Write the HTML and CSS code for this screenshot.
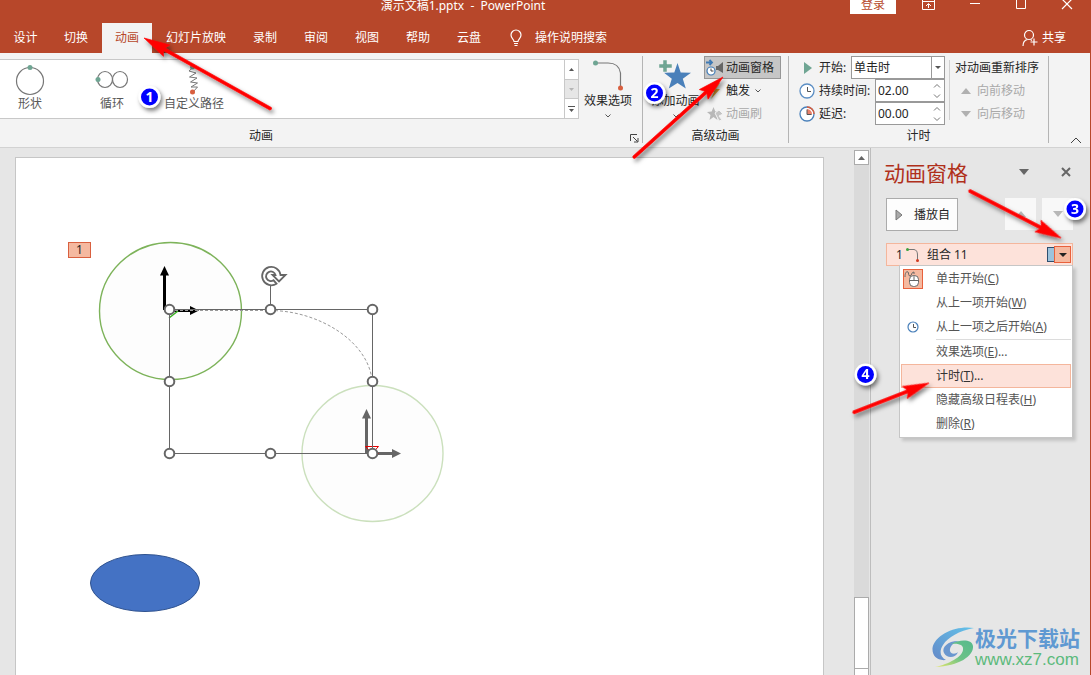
FILE: index.html
```html
<!DOCTYPE html>
<html lang="zh-CN">
<head>
<meta charset="utf-8">
<title>演示文稿1.pptx - PowerPoint</title>
<link rel="stylesheet" href="styles.css">
</head>
<body>
<div class="app">
  <header class="header">
    <div class="titlebar">
      <div class="doc-title">演示文稿1.pptx&nbsp; -&nbsp; PowerPoint</div>
      <button class="login" type="button">登录</button>
      <button class="win-btn" type="button" aria-label="功能区显示选项"><svg width="16" height="12" viewBox="0 0 16 12" fill="none" stroke="#fff"><path d="M1.500 -2V9.500H13.500V-2M1 1.500H14M7.500 8V4M5 6L7.500 3.500L10 6"/></svg></button>
      <button class="win-btn" type="button" aria-label="最小化"><svg width="16" height="12" viewBox="0 0 16 12" stroke="#fff"><path d="M3 3.500H13"/></svg></button>
      <button class="win-btn" type="button" aria-label="最大化"><svg width="16" height="12" viewBox="0 0 16 12" fill="none" stroke="#fff"><path d="M3.500 -2V8.500H12.500V-2"/></svg></button>
      <button class="win-btn" type="button" aria-label="关闭"><svg width="16" height="12" viewBox="0 0 16 12" stroke="#fff" stroke-width="1.200"><path d="M3 -1L13 9M13 -1L3 9"/></svg></button>
    </div>
    <nav class="tabs">
      <button class="tab" type="button">设计</button>
      <button class="tab" type="button">切换</button>
      <button class="tab tab-active" type="button">动画</button>
      <button class="tab" type="button">幻灯片放映</button>
      <button class="tab" type="button">录制</button>
      <button class="tab" type="button">审阅</button>
      <button class="tab" type="button">视图</button>
      <button class="tab" type="button">帮助</button>
      <button class="tab" type="button">云盘</button>
      <button class="tell-me" type="button"><svg width="14" height="18" viewBox="0 0 14 18" fill="none" stroke="#fff" stroke-width="1.200"><path d="M5 12.500C5 10.500 2 9.500 2 6A5 5 0 0 1 12 6C12 9.500 9 10.500 9 12.500ZM5 14.500H9M5.500 16.500H8.500"/></svg><span>操作说明搜索</span></button>
      <button class="share" type="button"><svg width="16" height="18" viewBox="0 0 16 18" fill="none" stroke="#fff" stroke-width="1.200"><circle cx="7" cy="6" r="4.500"/><path d="M1 17C1 13 3 11 5.500 10.500M8.500 10.500L10 11.500M12 9.500V16.500M8.500 13H15.500"/></svg><span>共享</span></button>
    </nav>
  </header>

  <section class="ribbon">
    <div class="group group-anim">
      <div class="group-body">
        <div class="gallery">
          <div class="gallery-items">
            <button class="gallery-item" type="button"><svg width="32" height="32" viewBox="0 0 32 32" fill="none"><circle cx="16" cy="17" r="13.500" stroke="#777" stroke-width="1.200"/><circle cx="16" cy="3.500" r="2.500" fill="#6fa593"/></svg><span>形状</span></button>
            <button class="gallery-item" type="button"><svg width="36" height="32" viewBox="0 0 36 32" fill="none"><ellipse cx="11" cy="15.500" rx="7.500" ry="8" stroke="#777" stroke-width="1.200"/><ellipse cx="26" cy="15.500" rx="7.500" ry="8" stroke="#777" stroke-width="1.200"/><circle cx="4" cy="15.500" r="2.500" fill="#6fa593"/></svg><span>循环</span></button>
            <button class="gallery-item" type="button"><svg width="32" height="32" viewBox="0 0 32 32" fill="none"><path d="M14.500 4L11 7L18 9L11.500 13L19 14L12.500 18L19.500 19L13 23L19.500 23L15 28" stroke="#777"/><circle cx="14.500" cy="3" r="2.500" fill="#6fa593"/><circle cx="14.500" cy="28" r="2.500" fill="#d85f3f"/></svg><span>自定义路径</span></button>
          </div>
          <div class="gallery-scroll">
            <button type="button" aria-label="上一行"><svg width="5" height="3"><path d="M0 3L2.500 0L5 3Z" fill="#555"/></svg></button>
            <button type="button" class="off" aria-label="下一行"><svg width="5" height="3"><path d="M0 0H5L2.500 3Z" fill="#b5b5b5"/></svg></button>
            <button type="button" aria-label="其他"><svg width="7" height="6"><path d="M0 0H7V1H0ZM1 3H6L3.500 6Z" fill="#555"/></svg></button>
          </div>
        </div>
        <button class="big-btn effect" type="button">
          <svg width="34" height="34" viewBox="0 0 34 34" fill="none"><path d="M5 4H17Q28 4 29.500 14V27" stroke="#777" stroke-width="1.200"/><circle cx="4.500" cy="4" r="2.500" fill="#6fa593"/><circle cx="29.500" cy="29" r="2.500" fill="#d85f3f"/></svg>
          <span>效果选项</span>
          <svg class="chev" width="6" height="4" fill="none" stroke="#555"><path d="M0.500 0.500L3 3L5.500 0.500"/></svg>
        </button>
      </div>
      <div class="group-label">动画</div>
      <button class="launcher" type="button" aria-label="动画设置"><svg width="9" height="9" fill="none" stroke="#444"><path d="M0.500 7V0.500H7M3 3L7.500 7.500M8 4V8H4"/></svg></button>
    </div>

    <div class="group group-adv">
      <div class="group-body">
        <button class="big-btn add" type="button">
          <svg width="34" height="34" viewBox="0 0 34 34"><path d="M18.500 4L21.700 13.500L32 13.800L23.800 19.800L26.800 29.500L18.500 24L9.800 29.500L12.800 19.800L5 13.800L15.300 13.500Z" fill="#4a80ba"/><path d="M4 1H8V5H13V9H8V13H4V9H0V5H4Z" fill="#6fa593" stroke="#f3f3f3" stroke-width=".5"/></svg>
          <span>添加动画</span>
          <svg class="chev" width="6" height="4" fill="none" stroke="#555"><path d="M0.500 0.500L3 3L5.500 0.500"/></svg>
        </button>
        <div class="stack">
          <button class="cmd cmd-on" type="button"><svg width="18" height="18" viewBox="0 0 18 18" fill="none"><path d="M0 3.500H6M3.500 1L6 3.500L3.500 6" stroke="#3f7ab5" stroke-width="1.800"/><circle cx="5" cy="12" r="4" fill="#fff" stroke="#3f7ab5" stroke-width="1.200"/><path d="M5 9.500V12H7.500" stroke="#444"/><path d="M10 7H12L17 3V14L12 11H10Z" fill="#666"/></svg><span>动画窗格</span></button>
          <button class="cmd" type="button"><svg width="18" height="18" viewBox="0 0 18 18"><path d="M9 1H14L10 7H14L5 17L8 10H4Z" fill="#e3a33c"/></svg><span>触发</span><svg class="chev" width="6" height="4" fill="none" stroke="#555"><path d="M0.500 0.500L3 3L5.500 0.500"/></svg></button>
          <button class="cmd" type="button" disabled><svg width="18" height="18" viewBox="0 0 18 18"><path d="M7.500 2L9.300 6.500L14 7L10.500 10L11.500 15L7.500 12L3.500 15L4.500 10L1 7L5.700 6.500Z" fill="#b8b8b8"/><path d="M9 8L13 5L17 9L13 11L16 15L13 16Z" fill="#c4c4c4" stroke="#f3f3f3"/></svg><span>动画刷</span></button>
        </div>
      </div>
      <div class="group-label">高级动画</div>
    </div>

    <div class="group group-time">
      <div class="group-body">
        <div class="timing">
          <div class="field">
            <svg width="16" height="16"><path d="M5 2L13 8L5 14Z" fill="#6fa593"/></svg>
            <label for="start">开始:</label>
            <div class="combo"><select id="start"><option>单击时</option></select><span class="combo-arrow"><svg width="6" height="3"><path d="M0 0H6L3 3Z" fill="#555"/></svg></span></div>
          </div>
          <div class="field">
            <svg width="16" height="16" fill="none"><circle cx="8" cy="8" r="7" fill="#fff" stroke="#5b8ec4" stroke-width="1.300"/><path d="M8.500 4V8.500H12" stroke="#555"/></svg>
            <label for="duration">持续时间:</label>
            <div class="spin"><input id="duration" type="text" value="02.00"><div class="spin-arrows"><svg width="8" height="16" fill="none" stroke="#777"><path d="M1 4.500L4 1.500L7 4.500M1 11.500L4 14.500L7 11.500"/></svg></div></div>
          </div>
          <div class="field">
            <svg width="16" height="16" fill="none"><circle cx="8" cy="8" r="7" fill="#fff" stroke="#4a80ba" stroke-width="1.300"/><path d="M8 1A7 7 0 0 1 15 8" stroke="#d85f3f" stroke-width="1.500"/><path d="M8 3A5 5 0 0 1 13 8.500H8Z" fill="#e8806a"/><path d="M8 3.500V8.500H12.500" stroke="#555"/></svg>
            <label for="delay">延迟:</label>
            <div class="spin"><input id="delay" type="text" value="00.00"><div class="spin-arrows"><svg width="8" height="16" fill="none" stroke="#777"><path d="M1 4.500L4 1.500L7 4.500M1 11.500L4 14.500L7 11.500"/></svg></div></div>
          </div>
        </div>
        <div class="reorder">
          <div class="reorder-title">对动画重新排序</div>
          <button class="move" type="button" disabled><svg width="10" height="6"><path d="M0 6L5 0L10 6Z" fill="#b0b0b0"/></svg><span>向前移动</span></button>
          <button class="move" type="button" disabled><svg width="10" height="6"><path d="M0 0H10L5 6Z" fill="#b0b0b0"/></svg><span>向后移动</span></button>
        </div>
      </div>
      <div class="group-label">计时</div>
    </div>
    <div class="ribbon-end"><button type="button" aria-label="折叠功能区"><svg width="12" height="7" fill="none" stroke="#444"><path d="M1 6L6 1L11 6"/></svg></button></div>
  </section>

  <main class="workspace">
    <div class="canvas">
      <div class="slide">
        <svg class="drawing" width="460" height="460" viewBox="16 158 460 460" fill="none">
          <ellipse cx="170.500" cy="311" rx="71" ry="68.500" fill="#fdfdfd" stroke="#7db35a" stroke-width="1.400"/>
          <ellipse cx="372.500" cy="453.500" rx="70.500" ry="68" fill="#fdfdfd" stroke="#cbe0bd" stroke-width="1.400"/>
          <path d="M164.500 310V274" stroke="#000" stroke-width="3"/><path d="M160 275.500L164.500 266L169 275.500Z" fill="#000"/>
          <path d="M170 310.500H191" stroke="#000" stroke-width="3"/><path d="M190 306L199 310.500L190 315Z" fill="#000"/>
          <path d="M366.500 453V418" stroke="#666" stroke-width="3"/><path d="M362 418.500L366.500 409L371 418.500Z" fill="#666"/>
          <path d="M372 453.500H393" stroke="#666" stroke-width="3"/><path d="M392 449L401 453.500L392 458Z" fill="#666"/>
          <path d="M169 318L178 311" stroke="#37b51f" stroke-width="1.500"/>
          <path d="M365.500 446.500H378.500L372 453.500ZM365.500 453.500H378.500" stroke="#e00000"/>
          <path d="M170 310.500H271C320 311 368 342 372 380" stroke="#999" stroke-dasharray="3 2"/>
          <path d="M169.500 309.500H372.500V453.500H169.500ZM270.500 309V285" stroke="#666"/>
          <g fill="#fff" stroke="#666" stroke-width="2">
            <circle cx="169.500" cy="309.500" r="4.800"/><circle cx="270.500" cy="309.500" r="4.800"/><circle cx="372.500" cy="309.500" r="4.800"/>
            <circle cx="169.500" cy="381.500" r="4.800"/><circle cx="372.500" cy="381.500" r="4.800"/>
            <circle cx="169.500" cy="453.500" r="4.800"/><circle cx="270.500" cy="453.500" r="4.800"/><circle cx="372.500" cy="453.500" r="4.800"/>
          </g>
          <path d="M276.500 283.700A9.200 9.200 0 1 1 280.500 275H285.500L279 281.500L272.500 275H275.500A4.800 4.800 0 1 0 273.500 280.300Z" fill="#fff" stroke="#666" stroke-width="1.800"/>
          <ellipse cx="145" cy="583" rx="54.500" ry="28.500" fill="#4472c4" stroke="#2f528f"/>
        </svg>
        <div class="anim-tag">1</div>
      </div>
    </div>
    <div class="scrollbar">
      <button class="scroll-up" type="button" aria-label="向上滚动"><svg width="7" height="4"><path d="M0 4L3.500 0L7 4Z" fill="#666"/></svg></button>
      <div class="scroll-track"></div>
      <div class="scroll-thumb"></div>
      <div class="scroll-end"></div>
    </div>
    <aside class="pane">
      <div class="pane-head">
        <h2>动画窗格</h2>
        <button type="button" aria-label="窗格选项"><svg width="10" height="6"><path d="M0 0H10L5 6Z" fill="#666"/></svg></button>
        <button type="button" aria-label="关闭窗格"><svg width="10" height="10" stroke="#666" stroke-width="2"><path d="M1 1L9 9M9 1L1 9"/></svg></button>
      </div>
      <div class="pane-tools">
        <button class="play" type="button"><svg width="8" height="12"><path d="M1 1L7 6L1 11Z" fill="#aaa" stroke="#777"/></svg><span>播放自</span></button>
        <button class="order" type="button" aria-label="上移"><svg width="10" height="6"><path d="M0 6L5 0L10 6Z" fill="#b8b8b8"/></svg></button>
        <button class="order" type="button" aria-label="下移"><svg width="10" height="6"><path d="M0 0H10L5 6Z" fill="#b8b8b8"/></svg></button>
      </div>
      <div class="entry">
        <span>1</span>
        <svg width="16" height="16" fill="none"><path d="M3 2.500H9Q12.500 3 12.500 8V13" stroke="#777"/><circle cx="2.500" cy="2.500" r="1.500" fill="#3fa33f"/><circle cx="12.500" cy="13.500" r="1.500" fill="#d03a20"/></svg>
        <span class="entry-name">组合 11</span>
        <i class="bar"></i>
        <button class="entry-drop" type="button" aria-label="打开菜单"><svg width="8" height="4"><path d="M0 0H8L4 4Z" fill="#222"/></svg></button>
        <div class="menu" role="menu">
          <button type="button" role="menuitem"><span class="mi mi-on"><svg width="18" height="18" fill="none" stroke="#666"><path d="M1 7C1 2 3 1 4 2S4 6 6 6S7 2 10 2V4"/><rect x="5.500" y="5.500" width="9" height="11" rx="4" fill="#fff"/><path d="M5.500 10.500H14.500M10 5.500V10.500"/></svg></span>单击开始(<u>C</u>)</button>
          <button type="button" role="menuitem"><span class="mi"></span>从上一项开始(<u>W</u>)</button>
          <button type="button" role="menuitem"><span class="mi"><svg width="12" height="12" fill="none"><circle cx="6" cy="6" r="5" stroke="#4a80ba" stroke-width="1.200"/><path d="M6.500 3V6.500H9" stroke="#555"/></svg></span>从上一项之后开始(<u>A</u>)</button>
          <div class="menu-sep"></div>
          <button type="button" role="menuitem"><span class="mi"></span>效果选项(<u>E</u>)...</button>
          <button type="button" role="menuitem" class="hot"><span class="mi"></span>计时(<u>T</u>)...</button>
          <button type="button" role="menuitem"><span class="mi"></span>隐藏高级日程表(<u>H</u>)</button>
          <button type="button" role="menuitem"><span class="mi"></span>删除(<u>R</u>)</button>
        </div>
      </div>
      <div class="brand">
        <svg width="43" height="42" viewBox="0 0 43 42">
          <defs>
            <linearGradient id="blue" x1="0" y1="1" x2="1" y2="0"><stop offset="0" stop-color="#6489c8"/><stop offset="1" stop-color="#63c3ea"/></linearGradient>
            <linearGradient id="green" x1="0" y1="1" x2="1" y2="0"><stop offset="0" stop-color="#e8e86a"/><stop offset=".5" stop-color="#6cc287"/><stop offset="1" stop-color="#56b98c"/></linearGradient>
          </defs>
          <path d="M42 1C25 -2 3 7 0.500 21C0 29 5 34 14 33C8 30 7 24 11 18C16 10 27 4 42 1Z" fill="url(#blue)"/>
          <path d="M28 14C17 13 9 20 12 26C15 32 24 31 26 25C23 28 17 27 18 22C19 18 22 15 28 14Z" fill="#6a97cf"/>
          <path d="M19 17C28 12 40 12 41 19C42 29 27 39 3 40C17 37 30 30 31 23C32 18 27 16 19 17Z" fill="url(#green)"/>
        </svg>
        <div class="brand-text"><div class="brand-name">极光下载站</div><div class="brand-url">www.xz7.com</div></div>
      </div>
    </aside>
  </main>

  <svg class="notes notes-left" width="300" height="130" viewBox="0 0 300 130">
    <defs><filter id="sh" x="-30%" y="-50%" width="160%" height="220%"><feDropShadow dx="2" dy="3" stdDeviation="2" flood-color="#000" flood-opacity=".5"/></filter></defs>
    <g filter="url(#sh)"><path transform="translate(144 38) rotate(29.200)" d="M0 0L26 -6.500L23 -1.500H145Q147 0 145 1.500H23L26 6.500Z" fill="#f00" stroke="#f00" stroke-width=".6"/></g>
    <g filter="url(#sh)"><circle cx="149.500" cy="97" r="11" fill="#fff"/></g>
    <circle cx="149.500" cy="97" r="8.500" fill="#00f"/><text class="num" x="149.500" y="102">1</text>
  </svg>
  <svg class="notes notes-right" width="491" height="440" viewBox="600 0 491 440">
    <g filter="url(#sh)" fill="#f00" stroke="#f00" stroke-width=".6">
      <path transform="translate(723 77) rotate(138)" d="M0 0L26 -6.500L23 -1.500H120Q122 0 120 1.500H23L26 6.500Z"/>
      <path transform="translate(1061 238) rotate(207.300)" d="M0 0L26 -6.500L23 -1.500H103Q105 0 103 1.500H23L26 6.500Z"/>
      <path transform="translate(929 383) rotate(158.700)" d="M0 0L26 -6.500L23 -1.500H81Q83 0 81 1.500H23L26 6.500Z"/>
    </g>
    <g filter="url(#sh)" fill="#fff"><circle cx="654.500" cy="93" r="11"/><circle cx="1075" cy="209" r="11"/><circle cx="865.500" cy="374.500" r="11"/></g>
    <g fill="#00f"><circle cx="654.500" cy="93" r="8.500"/><circle cx="1075" cy="209" r="8.500"/><circle cx="865.500" cy="374.500" r="8.500"/></g>
    <text class="num" x="654.500" y="98">2</text><text class="num" x="1075" y="214">3</text><text class="num" x="865.500" y="379">4</text>
  </svg>
</div>
</body>
</html>
```

FILE: styles.css
```css
* { box-sizing: border-box; }
body {
  margin: 0;
  font: 12px/16px "Noto Sans", "Noto Sans CJK SC", sans-serif;
  color: #262626;
}
button, input, select { font: inherit; color: inherit; margin: 0; }
button { padding: 0; border: 0; background: none; white-space: nowrap; }
svg { display: block; flex: none; }

.app {
  position: relative;
  display: flex;
  flex-direction: column;
  height: 100vh;
  overflow: hidden;
  background: #e6e6e6;
  border-right: 1px solid #b7472a;
}

/* Title bar and tabs */
.header { background: #b7472a; color: #fff; }
.titlebar { display: flex; align-items: flex-start; height: 23px; }
.doc-title { flex: 1; padding-left: 76px; text-align: center; line-height: 12px; }
.login {
  width: 46px;
  height: 14px;
  margin-right: 10px;
  background: #fff;
  color: #b7472a;
  line-height: 10px;
  padding-bottom: 4px;
}
.win-btn { width: 46px; display: flex; justify-content: center; }
.tabs { display: flex; gap: 1px; height: 30px; padding-left: 1px; }
.tab { width: 50px; line-height: 28px; }
.tab:first-child { width: 49px; }
.tab:nth-child(4) { width: 86px; }
.tab-active { background: #f3f3f3; color: #b7472a; }
.tell-me { display: flex; align-items: center; gap: 12px; margin-left: 14px; }
.share { display: flex; align-items: center; gap: 4px; margin-left: auto; padding-right: 24px; }

/* Ribbon */
.ribbon {
  display: flex;
  height: 95px;
  background: #f3f3f3;
  border-bottom: 1px solid #d2d2d2;
}
.group {
  position: relative;
  display: flex;
  flex-direction: column;
  margin: 3px 0 4px;
  border-right: 1px solid #b4b4b4;
}
.group-body { display: flex; height: 74px; }
.group-label { text-align: center; line-height: 14px; height: 14px; }
.group-anim { flex: 1; }
.group-anim .group-label { padding-right: 120px; }
.group-adv { width: 146px; }
.group-time { width: 260px; }
.launcher { position: absolute; right: 3px; bottom: 0; }

.gallery {
  flex: 1;
  display: flex;
  height: 60px;
  margin-top: 3px;
  background: #fff;
  border: 1px solid #c8c8c8;
  border-left: 0;
}
.gallery-items { flex: 1; display: flex; gap: 22px; }
.gallery-item {
  display: flex;
  flex-direction: column;
  align-items: center;
  width: 60px;
  padding-top: 4px;
  color: #595959;
}
.gallery-scroll { display: flex; flex-direction: column; width: 14px; border-left: 1px solid #c8c8c8; }
.gallery-scroll button { flex: 1; display: flex; align-items: center; justify-content: center; }
.gallery-scroll .off { background: #e6e6e6; border: solid #c8c8c8; border-width: 1px 0; }

.big-btn { display: flex; flex-direction: column; align-items: center; padding-top: 3px; }
.effect { width: 58px; margin-right: 5px; }
.add { width: 49px; margin: 0 4px 0 8px; }
.big-btn .chev { margin-top: 5px; }
.stack { width: 77px; }
.cmd {
  display: flex;
  align-items: center;
  gap: 2px;
  width: 100%;
  height: 23px;
  padding-left: 1px;
  border: 1px solid transparent;
}
.cmd-on { background: #c6c6c6; border-color: #969696; }
.cmd .chev { margin-left: 3px; }
.cmd:disabled, .move:disabled { color: #a9a9a9; }

.timing { width: 146px; margin-left: 10px; }
.field { display: flex; align-items: center; height: 23px; }
.field label { margin-left: 4px; white-space: nowrap; }
.combo, .spin {
  display: flex;
  margin-left: auto;
  height: 23px;
  background: #fff;
  border: 1px solid #999;
}
.combo { width: 94px; }
.spin { width: 70px; }
.combo select {
  flex: 1;
  min-width: 0;
  appearance: none;
  border: 0;
  background: none;
  padding: 0 2px;
}
.combo-arrow { display: flex; align-items: center; justify-content: center; width: 13px; border-left: 1px solid #999; }
.spin input { flex: 1; min-width: 0; border: 0; background: none; padding: 0 2px; }
.spin-arrows { display: flex; align-items: center; padding-right: 3px; }
.reorder {
  height: 60px;
  margin: 4px 0 0 4px;
  padding-left: 5px;
  border-left: 1px solid #d0d0d0;
}
.reorder-title { height: 19px; }
.move { display: flex; align-items: center; gap: 6px; height: 23px; padding-left: 6px; }
.ribbon-end { display: flex; align-items: flex-end; justify-content: flex-end; width: 41px; padding: 0 8px 3px 0; }

/* Editing area */
.workspace { flex: 1; display: flex; min-height: 0; }
.canvas { flex: 1; display: flex; min-width: 0; padding: 9px 30px 0 15px; }
.slide { position: relative; flex: 1; min-width: 0; background: #fff; border: 1px solid #c6c6c6; border-bottom: 0; }
.anim-tag {
  position: absolute;
  left: 52px;
  top: 84px;
  width: 23px;
  height: 16px;
  border: 1px solid #d9603f;
  background: #f5b9a0;
  line-height: 14px;
  text-align: center;
}
.scrollbar { display: flex; flex-direction: column; width: 15px; padding-top: 2px; margin-right: 1px; }
.scroll-up {
  display: flex;
  align-items: center;
  justify-content: center;
  height: 15px;
  background: #fff;
  border: 1px solid #ababab;
}
.scroll-track { flex: 1; background: #dadada; }
.scroll-thumb { height: 72px; background: #fff; border: 1px solid #ababab; }
.scroll-end { height: 6px; background: #fff; border: 1px solid #ababab; border-width: 0 1px; }

/* Animation pane */
.pane { position: relative; width: 220px; padding: 11px 17px 0 15px; border-left: 1px solid #bdbdbd; }
.pane-head { display: flex; align-items: center; height: 28px; padding-right: 2px; }
.pane-head h2 { flex: 1; margin: 0 0 0 -2px; font-size: 21px; font-weight: 400; line-height: 28px; color: #b0301b; }
.pane-head button { margin-left: 32px; padding-bottom: 3px; }
.pane-tools { display: flex; gap: 6px; margin-top: 11px; }
.play {
  display: flex;
  align-items: center;
  gap: 11px;
  width: 72px;
  height: 33px;
  margin-right: auto;
  padding-left: 8px;
  background: #fdfdfd;
  border: 1px solid #ababab;
}
.order { display: flex; align-items: center; justify-content: center; width: 31px; height: 32px; background: #f8f8f8; }
.entry {
  position: relative;
  display: flex;
  align-items: center;
  height: 23px;
  margin-top: 12px;
  padding: 0 1px 0 9px;
  background: #fde2da;
  border: 1px solid #f4b69c;
}
.entry > svg { margin-left: 2px; }
.entry-name { flex: 1; margin-left: 6px; }
.bar { width: 7px; height: 15px; background: #9dc3dc; border: 1px solid #2f4f6f; border-right: 0; }
.entry-drop {
  display: flex;
  align-items: center;
  justify-content: center;
  width: 17px;
  height: 17px;
  background: #f5b9a0;
  border: 1px solid #e8613c;
}
.menu {
  position: absolute;
  top: 21px;
  left: 12px;
  right: -1px;
  padding: 1px;
  background: #fff;
  border: 1px solid #c6c6c6;
  box-shadow: 3px 3px 3px rgba(0, 0, 0, .15);
  color: #555;
}
.menu button { display: flex; align-items: center; width: 100%; height: 24px; border: 1px solid transparent; }
.menu .hot { background: #fde2da; border-color: #f4b69c; color: #333; }
.menu-sep { height: 1px; margin-left: 35px; background: #dcdcdc; }
.mi { display: flex; align-items: center; justify-content: center; width: 20px; height: 20px; margin: 0 13px 0 1px; }
.mi-on { background: #f5b9a0; border: 1px solid #e8613c; }

.brand { position: absolute; right: 10px; bottom: 6px; display: flex; align-items: center; }
.brand-name { font-size: 21px; line-height: 24px; font-weight: 700; color: #5f99d2; white-space: nowrap; }
.brand-url { font: 17px/19px "Liberation Sans", sans-serif; color: #5cba7c; }

/* Callouts over the window */
.notes { position: absolute; top: 0; pointer-events: none; }
.notes-left { left: 0; }
.notes-right { right: -1px; }
.num { fill: #fff; font: 700 14px "Noto Sans", sans-serif; text-anchor: middle; }
```
